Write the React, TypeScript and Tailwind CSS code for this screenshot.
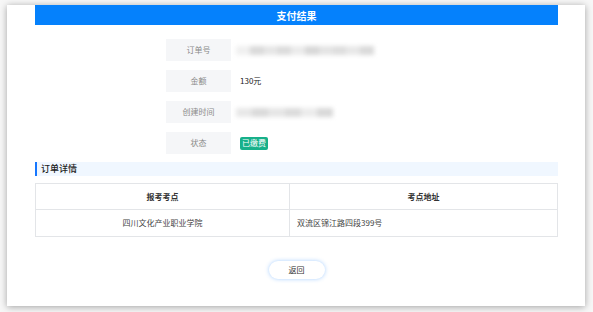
import React from "react";

const font = { fontFamily: '"Noto Sans CJK SC", "Noto Sans", sans-serif' };

function Blurred({ width, segs }: { width: number; segs: string[] }) {
  return (
    <div className="flex h-[9px] items-center blur-[2px]" style={{ width }}>
      {segs.map((c, i) => (
        <div key={i} className="h-full flex-1" style={{ background: c }} />
      ))}
    </div>
  );
}

function Row({ label, children }: { label: string; children: React.ReactNode }) {
  return (
    <div className="flex h-[22px] items-center">
      <div className="flex h-full w-[65px] items-center justify-center bg-[#f5f6f8] text-[8px] text-[#8a8a8a]">
        {label}
      </div>
      <div className="ml-[9px] flex items-center text-[8px] text-[#222]">{children}</div>
    </div>
  );
}

export default function App() {
  return (
    <div className="h-[312px] w-[593px] overflow-hidden bg-[#f7f7f7] pt-[5px]" style={font}>
      <div className="ml-[7px] flex h-[301px] w-[578px] flex-col bg-white pl-[28px] pr-[27px] shadow-[0_1px_7px_rgba(0,0,0,0.35)]">
        <div className="flex h-[20px] w-full items-center justify-center bg-[#0581fc] text-[10px] font-bold text-white">
          支付结果
        </div>
        <div className="ml-[131px] mt-[14px] flex flex-col gap-[9px]">
          <Row label="订单号">
            <div className="-ml-[4px]">
              <Blurred
                width={138}
                segs={["#f0f0f0", "#dadada", "#e6e6e6", "#dcdcdc", "#ebebeb", "#d8d8d8", "#e4e4e4", "#dedede", "#e8e8e8", "#dadada"]}
              />
            </div>
          </Row>
          <Row label="金额">130元</Row>
          <Row label="创建时间">
            <div className="-ml-[4px]">
              <Blurred
                width={97}
                segs={["#e8e8e8", "#dadada", "#e6e6e6", "#dcdcdc", "#ececec", "#d9d9d9"]}
              />
            </div>
          </Row>
          <Row label="状态">
            <span className="flex h-[13px] items-center rounded-[2px] bg-[#17b08a] px-[2px] text-[8px] text-white">
              已缴费
            </span>
          </Row>
        </div>

        <div className="mt-[8px] flex h-[14px] items-center border-l-2 border-[#1677ff] bg-[#f0f7ff] pl-[4px] text-[9px] font-medium text-[#222]">
          订单详情
        </div>

        <div className="mt-[7px] border border-[#e3e5e8] text-[8px] text-[#444]">
          <div className="grid h-[26px] grid-cols-[254px_1fr] border-b border-[#e3e5e8] font-bold text-[#333]">
            <div className="flex items-center justify-center border-r border-[#e3e5e8]">报考考点</div>
            <div className="flex items-center justify-center">考点地址</div>
          </div>
          <div className="grid h-[26px] grid-cols-[254px_1fr]">
            <div className="flex items-center justify-center border-r border-[#e3e5e8]">四川文化产业职业学院</div>
            <div className="flex items-center pl-[7px]">双流区锦江路四段399号</div>
          </div>
        </div>

        <div className="mt-[24px] flex justify-center">
          <button className="h-[18px] w-[56px] rounded-full bg-white text-[8px] text-[#333] shadow-[0_0_4px_rgba(64,150,255,0.45)]">
            返回
          </button>
        </div>
      </div>
    </div>
  );
}
